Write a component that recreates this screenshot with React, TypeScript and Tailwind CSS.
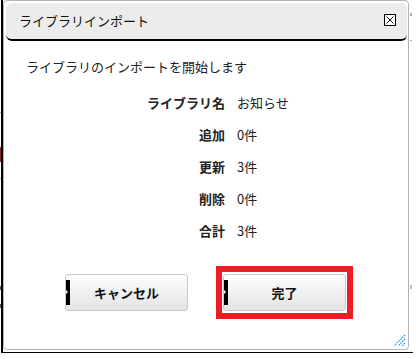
const ROWS = [
  { label: "ライブラリ名", value: "お知らせ" },
  { label: "追加", value: "0件" },
  { label: "更新", value: "3件" },
  { label: "削除", value: "0件" },
  { label: "合計", value: "3件" },
];

function DialogButton({ label }: { label: string }) {
  return (
    <button className="relative flex h-[37px] w-[123px] items-center justify-center rounded-[3px] border border-[#c9c9c9] bg-gradient-to-b from-[#fefefe] to-[#e4e4e4] text-[13px] font-bold text-[#111]">
      {/* left marker bar */}
      <span className="absolute left-0 top-[5px] h-[25px] w-[4px] bg-black" />
      <span className="absolute left-0 top-[15px] h-0 w-0 border-y-[2px] border-l-[2px] border-y-transparent border-l-white" />
      {label}
    </button>
  );
}

export default function App() {
  return (
    <div
      className="relative h-[359px] w-[416px] overflow-hidden bg-white"
      style={{ fontFamily: '"Noto Sans CJK JP", "Noto Sans", sans-serif' }}
    >
      {/* bits of the page underneath */}
      <span className="absolute left-0 top-[112px] h-[1px] w-[1px] bg-[#999]" />
      <span className="absolute left-0 top-[147px] h-[15px] w-[1px] bg-[#7a2a2a]" />
      <span className="absolute left-0 top-[178px] h-[1px] w-[1px] bg-[#999]" />
      <span className="absolute left-0 top-[286px] h-[4px] w-[1px] bg-[#555]" />
      <span className="absolute left-0 top-[304px] h-[4px] w-[1px] bg-[#555]" />
      <span className="absolute right-[4px] top-[13px] h-[3px] w-[2px] bg-[#aaa]" />
      <span className="absolute right-[4px] top-[40px] h-[1px] w-[2px] bg-[#aaa]" />
      <span className="absolute right-[4px] top-[285px] h-[4px] w-[2px] bg-[#bbb]" />

      <div className="ml-[1px] h-[353px] w-[412px] border-b border-l-2 border-black">
        <div className="relative flex h-[350px] w-[406px] flex-col rounded-[4px] border border-[#b3b3b3] bg-white">
          {/* header */}
          <div className="ml-[2px] mr-[1px] mt-[2px] flex h-[38px] items-center justify-between rounded-[6px] border-b-2 border-black bg-[#ececec] pl-[13px] pr-[11px]">
            <span className="text-[13px] leading-[20px] text-[#111]">ライブラリインポート</span>
            <span className="mb-[3px] flex h-[12px] w-[12px] items-center justify-center border border-black bg-white">
              <svg width="10" height="10" viewBox="0 0 10 10">
                <path d="M1.5 1.5 L8.5 8.5 M8.5 1.5 L1.5 8.5" stroke="#111" strokeWidth="1" />
              </svg>
            </span>
          </div>

          <p className="mt-[16px] pl-[22px] text-[13px] leading-[20px] text-[#222]">
            ライブラリのインポートを開始します
          </p>

          <div className="mt-[16px] flex flex-col gap-[12px]">
            {ROWS.map((row) => (
              <div key={row.label} className="flex text-[13px] leading-[20px] text-[#222]">
                <span className="w-[221px] text-right font-bold">{row.label}</span>
                <span className="ml-[12px]">{row.value}</span>
              </div>
            ))}
          </div>

          <div className="mt-[25px] flex items-center pl-[61px]">
            <DialogButton label="キャンセル" />
            <div className="ml-[28px] border-[6px] border-[#ee1c25] px-[1px] py-[2px]">
              <DialogButton label="完了" />
            </div>
          </div>

          {/* resize grip */}
          <svg className="absolute bottom-[2px] right-[2px]" width="13" height="13" viewBox="0 0 13 13">
            <path d="M12 1 L1 12 M12 5 L5 12 M12 9 L9 12" stroke="#1f8fe0" strokeWidth="1.2" strokeDasharray="1.5 1" />
          </svg>
        </div>
      </div>
    </div>
  );
}
